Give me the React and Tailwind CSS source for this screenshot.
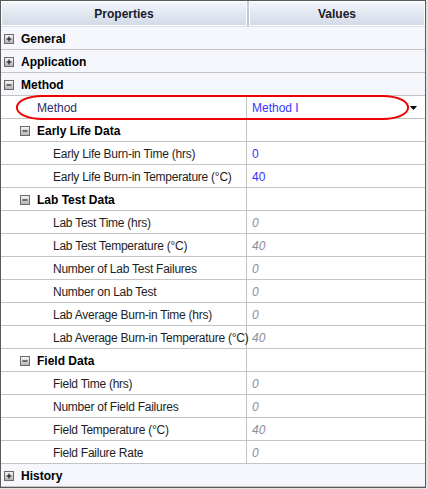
import React from "react";

// property grid rows: kind = cat | sub | leaf
const rows = [
  { kind: "cat", label: "General", open: false },
  { kind: "cat", label: "Application", open: false },
  { kind: "cat", label: "Method", open: true },
  { kind: "leaf", level: 1, label: "Method", value: "Method I", tone: "blue", dropdown: true },
  { kind: "sub", label: "Early Life Data" },
  { kind: "leaf", level: 2, label: "Early Life Burn-in Time (hrs)", value: "0", tone: "blue" },
  { kind: "leaf", level: 2, label: "Early Life Burn-in Temperature (°C)", value: "40", tone: "blue" },
  { kind: "sub", label: "Lab Test Data" },
  { kind: "leaf", level: 2, label: "Lab Test Time (hrs)", value: "0" },
  { kind: "leaf", level: 2, label: "Lab Test Temperature (°C)", value: "40" },
  { kind: "leaf", level: 2, label: "Number of Lab Test Failures", value: "0" },
  { kind: "leaf", level: 2, label: "Number on Lab Test", value: "0" },
  { kind: "leaf", level: 2, label: "Lab Average Burn-in Time (hrs)", value: "0" },
  { kind: "leaf", level: 2, label: "Lab Average Burn-in Temperature (°C)", value: "40" },
  { kind: "sub", label: "Field Data" },
  { kind: "leaf", level: 2, label: "Field Time (hrs)", value: "0" },
  { kind: "leaf", level: 2, label: "Number of Field Failures", value: "0" },
  { kind: "leaf", level: 2, label: "Field Temperature (°C)", value: "40" },
  { kind: "leaf", level: 2, label: "Field Failure Rate", value: "0" },
  { kind: "cat", label: "History", open: false },
];

function Expander({ open }) {
  return (
    <div className="w-[10px] h-[10px] shrink-0 border border-[#6a6a6a] bg-gradient-to-b from-[#f6f6f6] to-[#b4b4b4]">
      <svg width="8" height="8" viewBox="0 0 8 8" className="block">
        <line x1="1.5" y1="4" x2="6.5" y2="4" stroke="#000" strokeWidth="1" />
        {!open && <line x1="4" y1="1.5" x2="4" y2="6.5" stroke="#000" strokeWidth="1" />}
      </svg>
    </div>
  );
}

function Row({ row }) {
  if (row.kind === "cat") {
    return (
      <div className="h-[23px] flex items-center pt-[2px] border-b border-[#c4c4c4] bg-[#f5f7fd] pl-[3px]">
        <Expander open={row.open} />
        <span className="ml-[7px] font-bold text-[12px] text-black">{row.label}</span>
      </div>
    );
  }
  if (row.kind === "sub") {
    return (
      <div className="h-[23px] flex border-b border-[#c4c4c4] bg-white">
        <div className="w-[246px] flex items-center pt-[2px] pl-[19px] border-r border-[#c4c4c4]">
          <Expander open />
          <span className="ml-[7px] font-bold text-[12px] text-black">{row.label}</span>
        </div>
        <div className="flex-1" />
      </div>
    );
  }
  const valueTone =
    row.tone === "blue" ? "text-[#3535ff]" : "text-[#8e8e9a] italic";
  return (
    <div className="h-[23px] flex border-b border-[#c4c4c4] bg-white">
      <div
        className={
          row.level === 1
            ? "w-[246px] flex items-center pt-[2px] pl-[36px] border-r border-[#c4c4c4] text-[12px] text-[#2c2c6c] whitespace-nowrap"
            : "w-[246px] flex items-center pt-[2px] pl-[52px] border-r border-[#c4c4c4] text-[12px] tracking-[-0.25px] text-[#1e1e1e] whitespace-nowrap"
        }
      >
        {row.label}
      </div>
      <div className="flex-1 flex items-center justify-between pt-[2px] pl-[5px] pr-[8px] text-[12px]">
        <span className={valueTone}>{row.value}</span>
        {row.dropdown && (
          <svg width="7" height="4" viewBox="0 0 7 4" className="block">
            <polygon points="0,0 7,0 3.5,4" fill="#000" />
          </svg>
        )}
      </div>
    </div>
  );
}

export default function App() {
  return (
    <div
      className="w-[428px] h-[489px] bg-[#e2e2e2]"
      style={{ fontFamily: '"Liberation Sans", Arial, sans-serif' }}
    >
      <div className="relative w-[426px] h-[488px] border border-[#5a5a5a] bg-white overflow-hidden">
        {/* header */}
        <div className="h-[26px] flex border-b border-[#d8dde8]">
          <div className="w-[246px] flex items-center justify-center pt-[1px] border border-white bg-gradient-to-b from-[#f2f5fa] to-[#d3dbe8] font-bold text-[12px] text-[#1a1a28]">
            Properties
          </div>
          <div className="w-[2px] bg-[#c2c8da]" />
          <div className="flex-1 flex items-center justify-center pt-[1px] border border-white bg-gradient-to-b from-[#f2f5fa] to-[#d3dbe8] font-bold text-[12px] text-[#1a1a28]">
            Values
          </div>
        </div>

        {rows.map((row, i) => (
          <Row key={i} row={row} />
        ))}

        {/* red annotation ellipse around the Method row */}
        <div className="absolute left-[15px] top-[94px] w-[393px] h-[25px] border-2 border-[#ee0000] rounded-[26px/12px] pointer-events-none" />
      </div>
    </div>
  );
}
